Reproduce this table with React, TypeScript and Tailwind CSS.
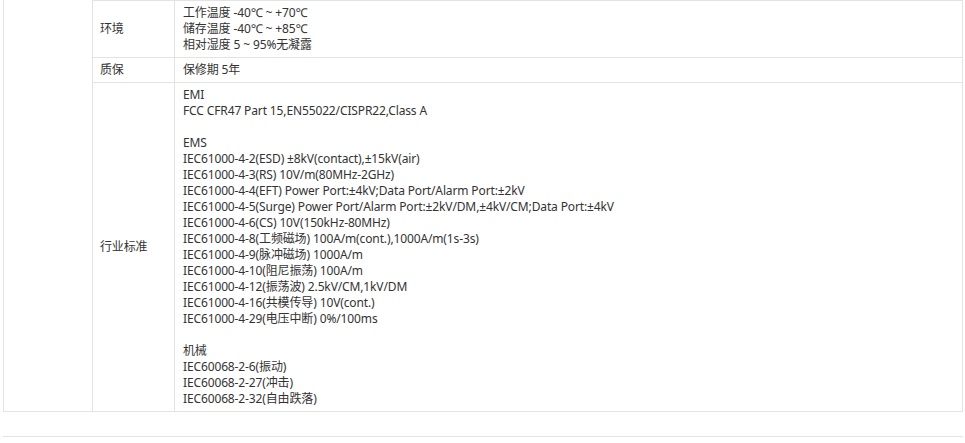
const emsLines = [
  'EMI',
  'FCC CFR47 Part 15,EN55022/CISPR22,Class A',
  '',
  'EMS',
  'IEC61000-4-2(ESD) ±8kV(contact),±15kV(air)',
  'IEC61000-4-3(RS) 10V/m(80MHz-2GHz)',
  'IEC61000-4-4(EFT) Power Port:±4kV;Data Port/Alarm Port:±2kV',
  'IEC61000-4-5(Surge) Power Port/Alarm Port:±2kV/DM,±4kV/CM;Data Port:±4kV',
  'IEC61000-4-6(CS) 10V(150kHz-80MHz)',
  'IEC61000-4-8(工频磁场) 100A/m(cont.),1000A/m(1s-3s)',
  'IEC61000-4-9(脉冲磁场) 1000A/m',
  'IEC61000-4-10(阻尼振荡) 100A/m',
  'IEC61000-4-12(振荡波) 2.5kV/CM,1kV/DM',
  'IEC61000-4-16(共模传导) 10V(cont.)',
  'IEC61000-4-29(电压中断) 0%/100ms',
  '',
  '机械',
  'IEC60068-2-6(振动)',
  'IEC60068-2-27(冲击)',
  'IEC60068-2-32(自由跌落)',
];

const rows = [
  {
    label: '环境',
    lines: ['工作温度 -40℃ ~ +70℃', '储存温度 -40℃ ~ +85℃', '相对湿度 5 ~ 95%无凝露'],
  },
  { label: '质保', lines: ['保修期 5年'] },
  { label: '行业标准', lines: emsLines },
];

export default function App() {
  return (
    <div
      className="min-h-[443px] bg-white text-[12px] leading-[16px] tracking-[-0.13px] text-[#333]"
      style={{ fontFamily: '"Noto Sans", "Noto Sans CJK SC", sans-serif' }}
    >
      <div className="ml-[3px] flex w-[960px] border-x border-b border-[#e3e3e3]">
        <div className="w-[89px] shrink-0 border-r border-[#e3e3e3]" />
        <div className="flex flex-1 flex-col">
          {rows.map((row) => (
            <div key={row.label} className="flex border-t border-[#e3e3e3]">
              <div className="flex w-[82px] shrink-0 items-center border-r border-[#e3e3e3] px-[7px]">
                {row.label}
              </div>
              <div className="flex-1 px-[8px] py-[4px]">
                {row.lines.map((line, j) => (
                  <div key={j} className="h-[16px] whitespace-pre">
                    {line}
                  </div>
                ))}
              </div>
            </div>
          ))}
        </div>
      </div>
      <div className="ml-[3px] mt-[24px] w-[960px] border-t border-[#e3e3e3]" />
    </div>
  );
}
